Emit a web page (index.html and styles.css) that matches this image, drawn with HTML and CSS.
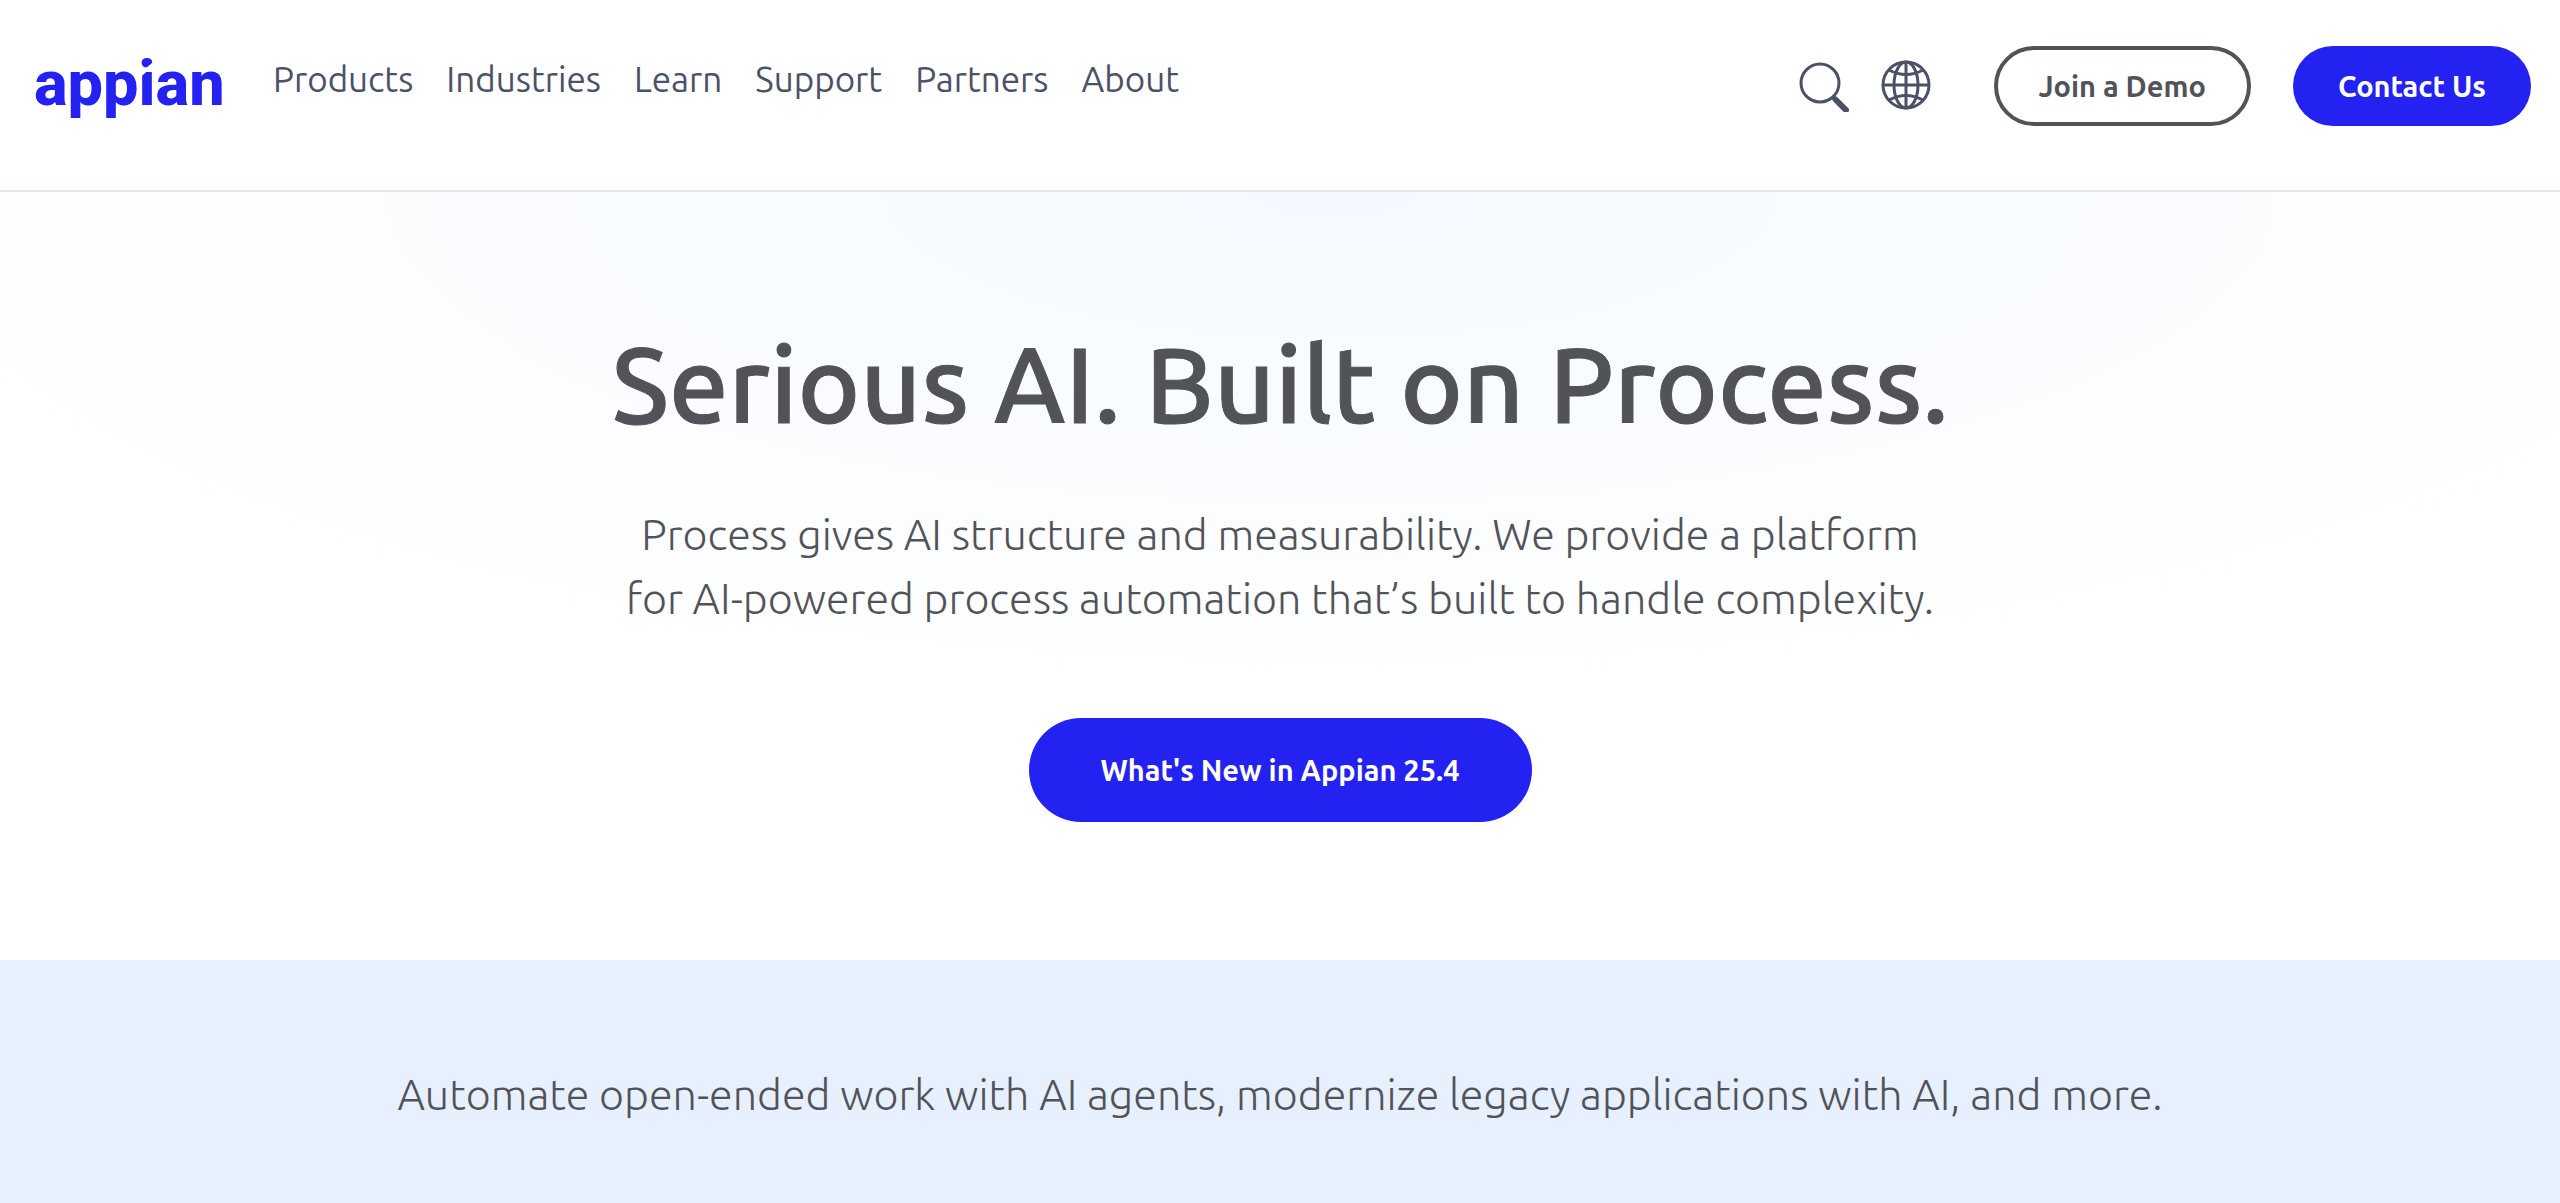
FILE: index.html
```html
<!DOCTYPE html>
<html lang="en">
<head>
  <meta charset="UTF-8">
  <meta name="viewport" content="width=device-width, initial-scale=1.0">
  <title>Appian</title>
  <link rel="stylesheet" href="styles.css">
</head>
<body>

  <!-- Header -->
  <header class="header">
    <a href="#" class="logo" aria-label="Appian home">
      <svg width="196" height="80" viewBox="0 0 196 80">
        <text class="logo-text" x="0" y="59">appian</text>
        <path class="logo-cut" d="M104 31 L124 14"/>
      </svg>
    </a>

    <nav class="nav">
      <a href="#">Products</a>
      <a href="#">Industries</a>
      <a href="#">Learn</a>
      <a href="#">Support</a>
      <a href="#">Partners</a>
      <a href="#">About</a>
    </nav>

    <div class="actions">
      <button type="button" class="icon-btn" aria-label="Search">
        <svg width="52" height="52" viewBox="0 0 52 52" fill="none" stroke="currentColor">
          <circle cx="22" cy="23" r="19" stroke-width="3"/>
          <path d="M35 37 L38 40" stroke-width="5"/>
          <path d="M38 40 L48 50" stroke-width="6" stroke-linecap="round"/>
        </svg>
      </button>
      <button type="button" class="icon-btn" aria-label="Language">
        <svg width="52" height="52" viewBox="0 0 52 52" fill="none" stroke="currentColor" stroke-width="3">
          <circle cx="26" cy="25" r="23"/>
          <ellipse cx="26" cy="25" rx="12" ry="23"/>
          <path d="M26 2 V48 M3 25 H49"/>
          <path d="M9 10 Q26 19 43 10 M9 40 Q26 31 43 40"/>
        </svg>
      </button>
      <a href="#" class="btn btn-outline">Join a Demo</a>
      <a href="#" class="btn">Contact Us</a>
    </div>
  </header>

  <main>
    <!-- Hero -->
    <section class="hero">
      <h1>Serious AI. Built on Process.</h1>
      <p>Process gives AI structure and measurability. We provide a platform<br>
        for AI-powered process automation that’s built to handle complexity.</p>
      <a href="#" class="btn btn-large">What's New in Appian 25.4</a>
    </section>

    <!-- Intro band -->
    <section class="band">
      <p>Automate open-ended work with AI agents, modernize legacy applications with AI, and more.</p>
    </section>
  </main>

</body>
</html>
```
FILE: styles.css
```css
* {
  box-sizing: border-box;
}

body {
  margin: 0;
  font-family: Ubuntu, "Open Sans", "Noto Sans", sans-serif;
  color: #525259;
  background-color: #fff;
}

a {
  text-decoration: none;
}

/* Header */
.header {
  display: flex;
  align-items: center;
  padding: 46px 29px 64px 34px;
  border-bottom: 2px solid #e6e7e9;
}

.logo {
  display: flex;
  margin-right: 43px;
}

.logo-text {
  font-family: Roboto, "Liberation Sans", sans-serif;
  font-size: 63px;
  font-weight: 800;
  fill: #2322f0;
}

.logo-cut {
  stroke: #fff;
  stroke-width: 3;
}

.nav {
  display: flex;
  gap: 33px;
  padding-bottom: 14px;
  font-size: 35px;
  line-height: 40px;
}

.nav a {
  color: #4b5167;
}

.actions {
  display: flex;
  align-items: center;
  margin-left: auto;
}

.icon-btn {
  display: flex;
  margin-right: 30px;
  padding: 0;
  border: none;
  background: none;
  color: #4b5167;
  cursor: pointer;
}

/* Buttons */
.btn {
  display: inline-block;
  padding: 20px 45px;
  border-radius: 56px;
  background-color: #2322f0;
  color: #fff;
  font-size: 29px;
  font-weight: 600;
  line-height: 40px;
}

.btn-outline {
  margin: 0 42px 0 32px;
  padding: 16px 41px;
  border: 4px solid #525259;
  background-color: transparent;
  color: #525259;
}

.btn-large {
  padding: 32px 72px;
}

/* Hero */
.hero {
  padding: 122px 40px 138px;
  text-align: center;
  background: radial-gradient(ellipse 60% 66% at 52% 0, #f4f9ff, #fff);
}

.hero h1 {
  margin: 0;
  font-size: 106px;
  font-weight: 500;
  line-height: 140px;
  -webkit-text-stroke: 1px #525259;
}

.hero p,
.band p {
  font-size: 43px;
  font-weight: 300;
  line-height: 64px;
}

.hero p {
  margin: 48px 0 88px;
}

/* Band */
.band {
  padding: 102px 40px;
  text-align: center;
  background-color: #e6f0ff;
}

.band p {
  margin: 0;
}
```
